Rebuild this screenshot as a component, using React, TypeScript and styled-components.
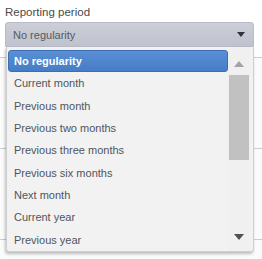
import React from "react";
import styled, { createGlobalStyle } from "styled-components";

const options: string[] = [
  "No regularity",
  "Current month",
  "Previous month",
  "Previous two months",
  "Previous three months",
  "Previous six months",
  "Next month",
  "Current year",
  "Previous year",
];

const GlobalStyle = createGlobalStyle`
  html, body {
    margin: 0;
    padding: 0;
    background: #ffffff;
    font-family: "Liberation Sans", Arial, sans-serif;
  }
`;

const Page = styled.div`
  position: relative;
  width: 262px;
  height: 259px;
  overflow: hidden;
  background: #ffffff;
`;

const Field = styled.div`
  display: flex;
  flex-direction: column;
  padding: 5px 8px 0 5px;
`;

const Label = styled.label`
  font-size: 11.5px;
  line-height: 14px;
  color: #4a4a4a;
  margin-bottom: 3px;
`;

const Select = styled.div`
  display: flex;
  align-items: center;
  justify-content: space-between;
  height: 25px;
  box-sizing: border-box;
  padding: 0 8px 0 7px;
  background: linear-gradient(#cbced7, #c0c3cd);
  border: 1px solid #b9bcc6;
  border-radius: 3px 3px 0 0;
  font-size: 11px;
  color: #555a60;
`;

const Caret = styled.span<{ size: number; color: string; up?: boolean }>`
  width: 0;
  height: 0;
  border-left: ${(p) => p.size}px solid transparent;
  border-right: ${(p) => p.size}px solid transparent;
  ${(p) =>
    p.up
      ? `border-bottom: ${p.size + 1}px solid ${p.color};`
      : `border-top: ${p.size + 1}px solid ${p.color};`}
`;

const Backdrop = styled.div`
  display: flex;
  flex-direction: column;
  margin-top: 10px;
`;

const BackRow = styled.div`
  height: 90px;
  border-top: 1px solid #c9ccd2;
  background: #fbfbfb;
`;

const Dropdown = styled.div`
  position: absolute;
  top: 47px;
  left: 6px;
  right: 8px;
  height: 204px;
  display: flex;
  background: #f2f2f2;
  border: 1px solid #cfcfcf;
  border-top: none;
  border-radius: 0 0 3px 3px;
  box-shadow: -1px 2px 3px rgba(0, 0, 0, 0.25);
`;

const List = styled.ul`
  flex: 1;
  list-style: none;
  margin: 0;
  padding: 3px 0 0 1px;
`;

const Item = styled.li<{ active: boolean }>`
  display: flex;
  align-items: center;
  height: 22.3px;
  box-sizing: border-box;
  padding-left: 5px;
  font-size: 11px;
  border-radius: 3px;
  color: ${(p) => (p.active ? "#ffffff" : "#50555b")};
  font-weight: ${(p) => (p.active ? "bold" : "normal")};
  background: ${(p) =>
    p.active ? "linear-gradient(#5a8fd4, #467dc6)" : "transparent"};
  border: 1px solid ${(p) => (p.active ? "#3d6eb3" : "transparent")};
`;

const Scrollbar = styled.div`
  width: 22px;
  margin-right: 3px;
  display: flex;
  flex-direction: column;
  background: #f0f0f0;
  padding: 6px 0 3px;
`;

const ArrowButton = styled.div`
  height: 22px;
  display: flex;
  align-items: center;
  justify-content: center;
`;

const Thumb = styled.div`
  height: 85px;
  background: #c1c1c1;
  margin: 0 1px;
`;

const Track = styled.div`
  flex: 1;
`;

export default function App() {
  return (
    <Page>
      <GlobalStyle />
      <Field>
        <Label>Reporting period</Label>
        <Select>
          <span>No regularity</span>
          <Caret size={4} color="#2f3238" />
        </Select>
      </Field>
      <Backdrop>
        <BackRow />
        <BackRow />
        <BackRow />
      </Backdrop>
      <Dropdown>
        <List>
          {options.map((o, i) => (
            <Item key={o} active={i === 0}>
              {o}
            </Item>
          ))}
        </List>
        <Scrollbar>
          <ArrowButton>
            <Caret size={5} color="#a3a3a3" up />
          </ArrowButton>
          <Thumb />
          <Track />
          <ArrowButton>
            <Caret size={5} color="#505050" />
          </ArrowButton>
        </Scrollbar>
      </Dropdown>
    </Page>
  );
}
